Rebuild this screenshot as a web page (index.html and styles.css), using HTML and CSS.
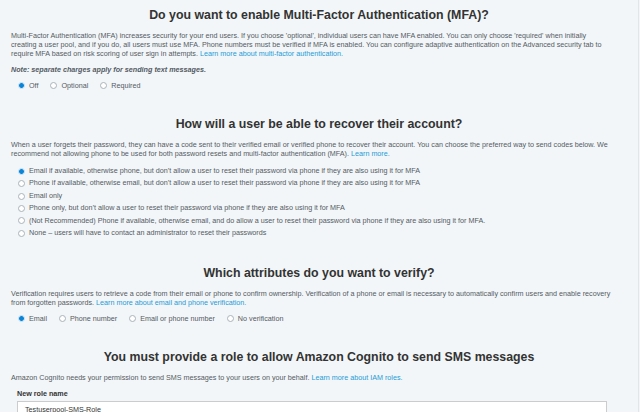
FILE: index.html
```html
<!DOCTYPE html>
<html lang="en">
<head>
  <meta charset="UTF-8">
  <title>Cognito - MFA and verifications</title>
  <link rel="stylesheet" href="styles.css">
</head>
<body>

<div class="page">

  <!-- MFA -->
  <div class="section first">
    <h2>Do you want to enable Multi-Factor Authentication (MFA)?</h2>
    <p>Multi-Factor Authentication (MFA) increases security for your end users. If you choose 'optional', individual users can have MFA enabled. You can only choose 'required' when initially creating a user pool, and if you do, all users must use MFA. Phone numbers must be verified if MFA is enabled. You can configure adaptive authentication on the Advanced security tab to require MFA based on risk scoring of user sign in attempts. <a href="#">Learn more about multi-factor authentication.</a></p>
    <p class="note">Note: separate charges apply for sending text messages.</p>
    <div class="radios inline">
      <label class="radio checked"><span class="dot"></span>Off</label>
      <label class="radio"><span class="dot"></span>Optional</label>
      <label class="radio"><span class="dot"></span>Required</label>
    </div>
  </div>

  <!-- Account recovery -->
  <div class="section">
    <h2>How will a user be able to recover their account?</h2>
    <p>When a user forgets their password, they can have a code sent to their verified email or verified phone to recover their account. You can choose the preferred way to send codes below. We recommend not allowing phone to be used for both password resets and multi-factor authentication (MFA). <a href="#">Learn more.</a></p>
    <div class="radios list">
      <label class="radio checked"><span class="dot"></span>Email if available, otherwise phone, but don’t allow a user to reset their password via phone if they are also using it for MFA</label>
      <label class="radio"><span class="dot"></span>Phone if available, otherwise email, but don’t allow a user to reset their password via phone if they are also using it for MFA</label>
      <label class="radio"><span class="dot"></span>Email only</label>
      <label class="radio"><span class="dot"></span>Phone only, but don’t allow a user to reset their password via phone if they are also using it for MFA</label>
      <label class="radio"><span class="dot"></span>(Not Recommended) Phone if available, otherwise email, and do allow a user to reset their password via phone if they are also using it for MFA.</label>
      <label class="radio"><span class="dot"></span>None – users will have to contact an administrator to reset their passwords</label>
    </div>
  </div>

  <!-- Verification -->
  <div class="section">
    <h2>Which attributes do you want to verify?</h2>
    <p>Verification requires users to retrieve a code from their email or phone to confirm ownership. Verification of a phone or email is necessary to automatically confirm users and enable recovery from forgotten passwords. <a href="#">Learn more about email and phone verification.</a></p>
    <div class="radios inline">
      <label class="radio checked"><span class="dot"></span>Email</label>
      <label class="radio"><span class="dot"></span>Phone number</label>
      <label class="radio"><span class="dot"></span>Email or phone number</label>
      <label class="radio"><span class="dot"></span>No verification</label>
    </div>
  </div>

  <!-- SMS role -->
  <div class="section">
    <h2>You must provide a role to allow Amazon Cognito to send SMS messages</h2>
    <p>Amazon Cognito needs your permission to send SMS messages to your users on your behalf. <a href="#">Learn more about IAM roles.</a></p>
    <div class="field">
      <div class="field-label">New role name</div>
      <div class="input">Testuserpool-SMS-Role</div>
    </div>
  </div>

</div>

</body>
</html>
```

FILE: styles.css
```css
html, body {
  margin: 0;
  padding: 0;
  background-color: #f2f6f8;
}
body {
  font-family: "Liberation Sans", Arial, sans-serif;
  color: #545b64;
  overflow: hidden;
}
.page {
  width: 616px;
  padding: 0 11px;
  border-right: 1px solid #e2e6e9;
  min-height: 412px;
}
.section {
  margin-top: 27px;
}
.section.first {
  margin-top: 0;
  padding-top: 8px;
}
h2 {
  margin: 0 0 9px;
  font-size: 12.35px;
  line-height: 14px;
  text-align: center;
  color: #333;
}
p {
  max-width: 600px;
  margin: 0 0 7px;
  font-size: 7.2px;
  line-height: 9px;
}
a {
  color: #1e9bd7;
  text-decoration: none;
}
.note {
  font-weight: bold;
  font-style: italic;
  margin-top: 7px;
}
.radios {
  padding-left: 7px;
  font-size: 7.2px;
}
.radios.inline {
  display: flex;
  gap: 12px;
  line-height: 9px;
}
.radios.list {
  display: flex;
  flex-direction: column;
  line-height: 12.4px;
}
.radio {
  display: flex;
  align-items: center;
  gap: 4px;
}
.dot {
  width: 7px;
  height: 7px;
  box-sizing: border-box;
  border-radius: 50%;
  border: 1px solid #aab4bb;
  background: white;
  flex: none;
}
.radio.checked .dot {
  border: 1px solid #b9d9f0;
  background: radial-gradient(circle, #0a84d6 0 2.4px, #eaf4fb 2.6px);
}
.field {
  padding-left: 6px;
}
.field-label {
  font-size: 7.2px;
  line-height: 9px;
  font-weight: bold;
  color: #333;
  margin-top: 7px;
}
.input {
  margin-top: 3px;
  width: 574px;
  height: 18px;
  padding: 3px 7px;
  background: white;
  border: 1px solid #ccc;
  font-size: 7.2px;
  color: #333;
  line-height: 9px;
}
```
